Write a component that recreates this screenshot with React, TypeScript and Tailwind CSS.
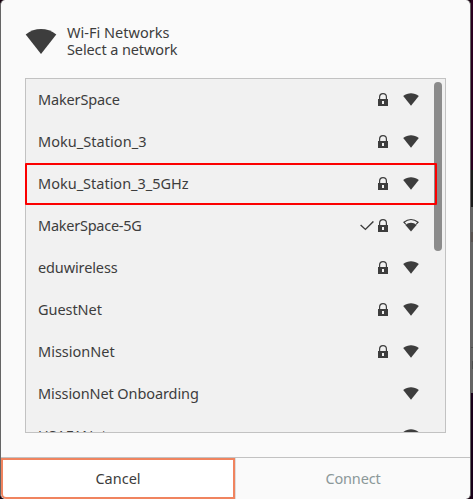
import React from "react";

type Network = {
  name: string;
  tracking: string;
  locked: boolean;
  active?: boolean;
  medium?: boolean;
  selected?: boolean;
};

const networks: Network[] = [
  { name: "MakerSpace", tracking: "tracking-[-0.15px]", locked: true },
  { name: "Moku_Station_3", tracking: "tracking-[0.05px]", locked: true },
  { name: "Moku_Station_3_5GHz", tracking: "tracking-[0px]", locked: true, selected: true },
  { name: "MakerSpace-5G", tracking: "tracking-[-0.25px]", locked: true, active: true, medium: true },
  { name: "eduwireless", tracking: "tracking-[-0.12px]", locked: true },
  { name: "GuestNet", tracking: "tracking-[-0.05px]", locked: true },
  { name: "MissionNet", tracking: "tracking-[0px]", locked: true },
  { name: "MissionNet Onboarding", tracking: "tracking-[-0.1px]", locked: false },
  { name: "USAFANet", tracking: "tracking-[0px]", locked: false },
];

function Wifi({ medium }: { medium?: boolean }) {
  return (
    <svg className="h-[14px] w-[16px] shrink-0" viewBox="0 0 16 14" fill="#3d3d3d">
      {medium ? (
        <>
          <path
            d="M2.9 5.3.9 3.2C5.2-.2 10.8-.2 15.1 3.2L13.1 5.3"
            fill="none"
            stroke="#3d3d3d"
            strokeWidth="1.1"
          />
          <path d="M2.4 5.9C5.8 2.9 10.2 2.9 13.6 5.9L8 12.6Z" />
        </>
      ) : (
        <path d="M.2 3.1C5-.6 11-.6 15.8 3.1L8 12.7Z" />
      )}
    </svg>
  );
}

function Lock() {
  return (
    <svg className="h-[14px] w-[10px] shrink-0" viewBox="0 0 10 14">
      <path d="M1.6 6V4a3.4 3.4 0 0 1 6.8 0V6" fill="none" stroke="#3d3d3d" strokeWidth="1.2" />
      <path d="M0 6h10v7H0ZM4 8v3h2V8Z" fill="#3d3d3d" fillRule="evenodd" />
    </svg>
  );
}

function Row({ network }: { network: Network }) {
  return (
    <div className="relative flex h-[42px] shrink-0 items-center pl-3 pr-[26px]">
      {network.selected && (
        <div className="absolute -left-px top-0 h-[42px] w-[412px] rounded-[1px] border-2 border-[#fb0000]" />
      )}
      <span className={`flex-1 whitespace-nowrap ${network.tracking}`}>{network.name}</span>
      {network.active && (
        <svg className="mr-[4px] h-[10px] w-[14px]" viewBox="0 0 14 10">
          <path d="M.6 4.1 5.4 8.4 13.4.4" fill="none" stroke="#3d3d3d" strokeWidth="1.4" />
        </svg>
      )}
      {network.locked && <Lock />}
      <span className="ml-[15px] flex">
        <Wifi medium={network.medium} />
      </span>
    </div>
  );
}

export default function App() {
  return (
    <div className="flex h-[499px] w-[473px] overflow-hidden bg-[#656565] font-['Noto_Sans','Open_Sans',sans-serif] text-[14.5px] text-[#3d3d3d]">
      <div className="flex w-[471px] shrink-0 bg-[#16000f]">
        <div className="flex w-full flex-col overflow-hidden rounded-[5px] border-x border-[#656565] bg-[#fafafa]">
          <header className="flex h-[78px] shrink-0 pl-6 pt-[24px]">
            <svg className="mt-[4px] h-[27px] w-8" viewBox="0 0 32 27">
              <path d="M.7 6.4C10-.8 22-.8 31.3 6.4L16 26Z" fill="#3d3d3d" />
            </svg>
            <div className="ml-[10px] leading-[17px]">
              <div className="tracking-[0.02px]">Wi-Fi Networks</div>
              <div className="tracking-[-0.11px]">Select a network</div>
            </div>
          </header>

          <div className="relative ml-6 h-[355px] w-[421px] shrink-0 overflow-x-visible overflow-y-clip border border-[#c2c2c2] bg-[#f1f1f1]">
            <div className="absolute right-[3px] top-[3px] h-[169px] w-2 rounded-full bg-[#8b8b8b]" />
            {networks.map((network) => (
              <Row key={network.name} network={network} />
            ))}
          </div>

          <footer className="mt-6 flex h-[42px] shrink-0 border-t border-[#c2c2c2]">
            <button className="w-[234px] rounded-bl-[5px] border-2 border-[#f0845f] bg-white">Cancel</button>
            <button className="flex-1 border-l border-[#dddddd] tracking-[-0.15px] text-[#8b9899]">Connect</button>
          </footer>
        </div>
      </div>
      <div className="flex w-[2px] flex-col">
        <div className="h-[170px] bg-[#290020]" />
        <div className="h-[37px] bg-[#1b1b1b]" />
        <div className="flex h-[186px] flex-col bg-[#656565]">
          <div className="mt-[25px] h-[10px] bg-[#595250]" />
          <div className="mt-[105px] h-px bg-[#4c4c4c]" />
          <div className="ml-px mt-[13px] h-[8px] bg-[#4c4c4c]" />
        </div>
        <div className="h-[106px] bg-[#19001a]" />
      </div>
    </div>
  );
}
